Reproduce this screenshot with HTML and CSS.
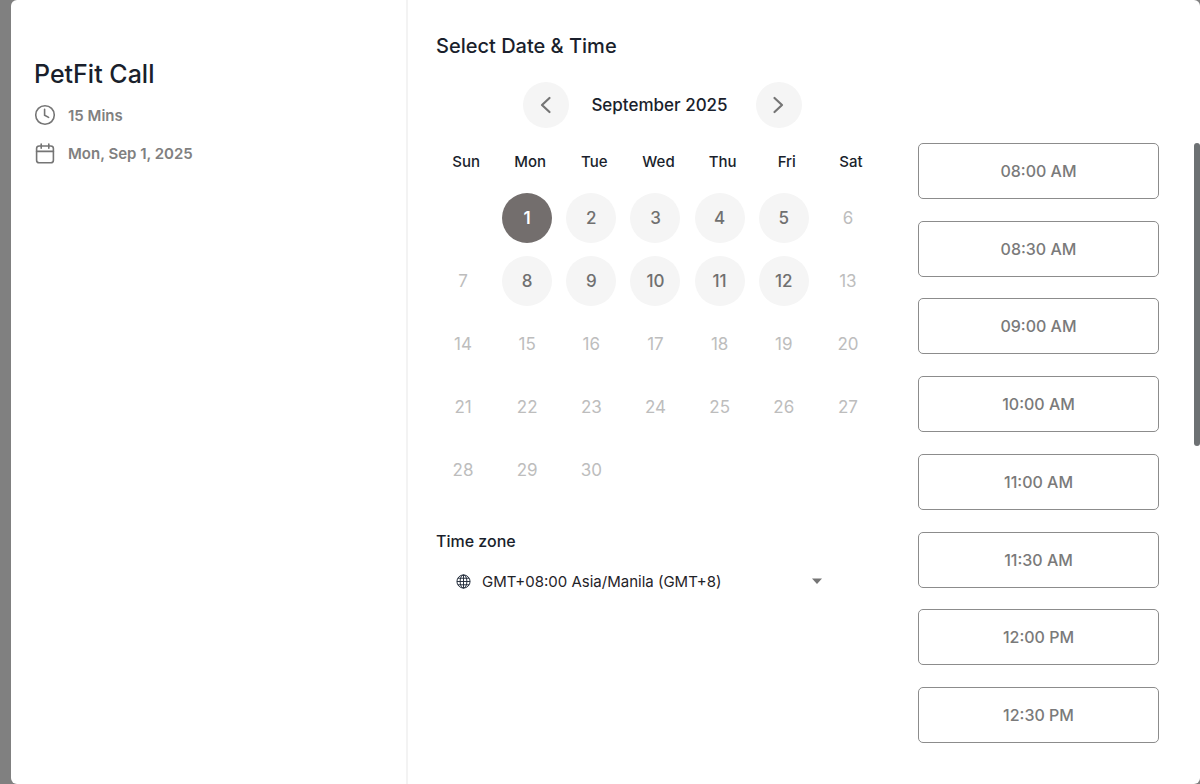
FILE: index.html
```html
<!DOCTYPE html>
<html lang="en">
<head>
<meta charset="utf-8">
<meta name="viewport" content="width=device-width, initial-scale=1">
<title>PetFit Call</title>
<link rel="stylesheet" href="styles.css">
</head>
<body>
<div class="dialog">
  <aside class="summary">
    <h1 class="summary-title">PetFit Call</h1>
    <p class="summary-row">
      <svg class="summary-icon" viewBox="0 0 22 22" aria-hidden="true"><circle cx="11" cy="11" r="9.3"/><path d="M10.6 5.2v6l4 2.2"/></svg>
      15 Mins
    </p>
    <p class="summary-row">
      <svg class="summary-icon" viewBox="0 0 22 22" aria-hidden="true"><rect x="2.6" y="4" width="16.8" height="16.8" rx="2.6"/><path d="M2.6 9.4h16.800M7.2 2v4.200M14.800 2v4.200"/></svg>
      Mon, Sep 1, 2025
    </p>
  </aside>
  <main class="booking">
    <section class="calendar">
      <h2 class="booking-title">Select Date &amp; Time</h2>
      <div class="month-nav">
        <button class="nav-button" type="button" aria-label="Previous month"><svg class="chevron" viewBox="0 0 24 24"><path d="M15.500 5l-7.500 7 7.500 7"/></svg></button>
        <span class="month-name">September 2025</span>
        <button class="nav-button" type="button" aria-label="Next month"><svg class="chevron" viewBox="0 0 24 24"><path d="M7.500 5l7.500 7-7.500 7"/></svg></button>
      </div>
      <table class="days">
        <thead>
          <tr><th>Sun</th><th>Mon</th><th>Tue</th><th>Wed</th><th>Thu</th><th>Fri</th><th>Sat</th></tr>
        </thead>
        <tbody>
          <tr><td></td><td><button class="day selected" type="button">1</button></td><td><button class="day" type="button">2</button></td><td><button class="day" type="button">3</button></td><td><button class="day" type="button">4</button></td><td><button class="day" type="button">5</button></td><td><button class="day" type="button" disabled>6</button></td></tr>
          <tr><td><button class="day" type="button" disabled>7</button></td><td><button class="day" type="button">8</button></td><td><button class="day" type="button">9</button></td><td><button class="day" type="button">10</button></td><td><button class="day" type="button">11</button></td><td><button class="day" type="button">12</button></td><td><button class="day" type="button" disabled>13</button></td></tr>
          <tr><td><button class="day" type="button" disabled>14</button></td><td><button class="day" type="button" disabled>15</button></td><td><button class="day" type="button" disabled>16</button></td><td><button class="day" type="button" disabled>17</button></td><td><button class="day" type="button" disabled>18</button></td><td><button class="day" type="button" disabled>19</button></td><td><button class="day" type="button" disabled>20</button></td></tr>
          <tr><td><button class="day" type="button" disabled>21</button></td><td><button class="day" type="button" disabled>22</button></td><td><button class="day" type="button" disabled>23</button></td><td><button class="day" type="button" disabled>24</button></td><td><button class="day" type="button" disabled>25</button></td><td><button class="day" type="button" disabled>26</button></td><td><button class="day" type="button" disabled>27</button></td></tr>
          <tr><td><button class="day" type="button" disabled>28</button></td><td><button class="day" type="button" disabled>29</button></td><td><button class="day" type="button" disabled>30</button></td><td></td><td></td><td></td><td></td></tr>
        </tbody>
      </table>
      <label class="zone-label" for="zone">Time zone</label>
      <div class="zone">
        <svg class="globe" viewBox="0 0 16 16" aria-hidden="true"><circle cx="8" cy="8" r="7"/><ellipse cx="8" cy="8" rx="3.6" ry="7"/><path d="M8 1v14M1 8h14M2 4.500h12M2 11.500h12"/></svg>
        <select class="zone-select" id="zone"><option>GMT+08:00 Asia/Manila (GMT+8)</option></select>
        <svg class="caret" viewBox="0 0 10 6" aria-hidden="true"><path d="M0 .5h10L5 6z"/></svg>
      </div>
    </section>
    <section class="slots" aria-label="Available times">
      <button class="slot" type="button">08:00 AM</button>
      <button class="slot" type="button">08:30 AM</button>
      <button class="slot" type="button">09:00 AM</button>
      <button class="slot" type="button">10:00 AM</button>
      <button class="slot" type="button">11:00 AM</button>
      <button class="slot" type="button">11:30 AM</button>
      <button class="slot" type="button">12:00 PM</button>
      <button class="slot" type="button">12:30 PM</button>
    </section>
    <div class="scrollbar"><div class="scroll-thumb"></div></div>
  </main>
</div>
</body>
</html>
```
FILE: styles.css
```css
* { box-sizing: border-box; }

body {
  margin: 0;
  padding-left: 11px;
  background: #808080;
  color: #1a1f2c;
  font-family: Inter, "Liberation Sans", sans-serif;
}

button, select { font-family: inherit; padding: 0; border: 0; }
h1, h2, p { margin: 0; font-weight: 500; }

.dialog {
  display: flex;
  min-height: 100vh;
  background: #fff;
  border-radius: 6px;
  overflow: hidden;
}

.summary {
  flex: 1 1 397px;
  padding: 56px 23px;
  border-right: 2px solid #f3f3f3;
}
.summary-title { font-size: 25px; line-height: 36px; margin-bottom: 4px; }
.summary-row {
  display: flex;
  align-items: center;
  gap: 12px;
  height: 38px;
  color: #808080;
  font-size: 15px;
  font-weight: 600;
}
.summary-icon {
  width: 22px;
  height: 22px;
  fill: none;
  stroke: #757575;
  stroke-width: 1.6;
  stroke-linecap: round;
}

.booking { display: flex; flex: 2 1 792px; }

.calendar { flex: 1; padding: 32px 0 32px 23px; }
.booking-title { padding-left: 5px; font-size: 20px; line-height: 28px; }

.month-nav {
  display: flex;
  align-items: center;
  justify-content: space-between;
  margin: 22px 78px 0 92px;
}
.nav-button {
  display: grid;
  place-items: center;
  width: 46px;
  height: 46px;
  border-radius: 50%;
  background: #f5f5f5;
}
.chevron {
  width: 24px;
  height: 24px;
  fill: none;
  stroke: #757575;
  stroke-width: 2.2;
  stroke-linecap: round;
  stroke-linejoin: round;
}
.month-name { padding-right: 6px; font-size: 17px; font-weight: 500; }

.days {
  width: 100%;
  margin-top: 17px;
  border-collapse: collapse;
  table-layout: fixed;
}
.days th {
  height: 32px;
  padding: 0 0 0 6px;
  font-size: 15px;
  font-weight: 500;
}
.days thead::after { content: ""; display: block; height: 9px; }
.days td { height: 63px; padding: 0; text-align: center; }
.day {
  width: 50px;
  height: 50px;
  border-radius: 50%;
  background: #f5f5f5;
  color: #707070;
  font-size: 17px;
  font-weight: 500;
}
.day.selected { background: #736e6d; color: #fff; font-weight: 600; }
.day:disabled { background: none; color: #bdbdbd; font-weight: 400; }

.zone-label {
  display: block;
  margin-top: 28px;
  padding-left: 5px;
  font-size: 16px;
  line-height: 24px;
  font-weight: 500;
}
.zone {
  display: flex;
  align-items: center;
  height: 40px;
  margin-top: 8px;
  padding: 0 58px 0 25px;
}
.globe {
  width: 15px;
  height: 15px;
  margin-right: 11px;
  fill: none;
  stroke: #1f2937;
  stroke-width: 1;
}
.zone-select {
  flex: 1;
  appearance: none;
  background: none;
  color: #1f2328;
  font-size: 15px;
}
.caret { width: 10px; height: 6px; fill: #757575; }

.slots {
  display: flex;
  flex-direction: column;
  justify-content: space-between;
  width: 241px;
  margin-left: 38px;
  padding: 143px 0 41px;
}
.slot {
  height: 56px;
  border: 1px solid #8c8c8c;
  border-radius: 5px;
  background: #fff;
  color: #7a7a7a;
  font-size: 16px;
  font-weight: 500;
}

.scrollbar { width: 6px; margin-left: 35px; padding-top: 143px; }
.scroll-thumb { height: 303px; border-radius: 3px; background: #6d7173; }
```
